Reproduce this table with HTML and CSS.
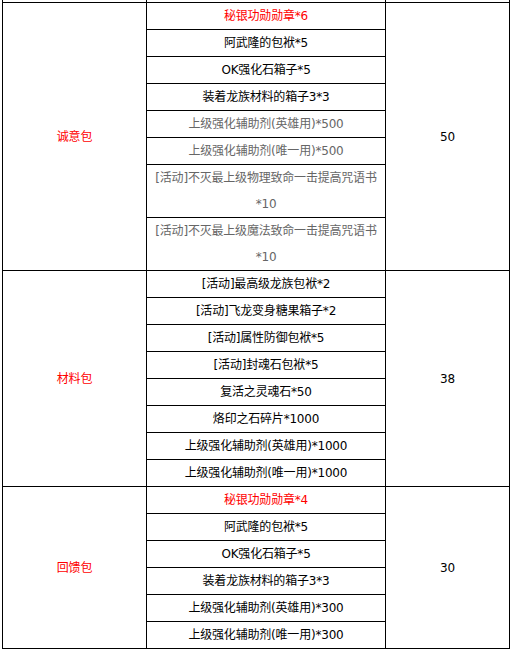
FILE: index.html
```html
<!DOCTYPE html>
<html lang="zh-CN">
<head>
<meta charset="utf-8">
<title>礼包</title>
<link rel="stylesheet" href="styles.css">
</head>
<body>
<table class="packs">
  <colgroup>
    <col class="c-name">
    <col class="c-items">
    <col class="c-price">
  </colgroup>
  <tbody>
    <tr class="stub"><td></td><td></td><td></td></tr>

    <tr>
      <td class="name" rowspan="8">诚意包</td>
      <td class="item red">秘银功勋勋章*6</td>
      <td class="price" rowspan="8">50</td>
    </tr>
    <tr><td class="item">阿武隆的包袱*5</td></tr>
    <tr><td class="item">OK强化石箱子*5</td></tr>
    <tr><td class="item">装着龙族材料的箱子3*3</td></tr>
    <tr><td class="item gray">上级强化辅助剂(英雄用)*500</td></tr>
    <tr><td class="item gray">上级强化辅助剂(唯一用)*500</td></tr>
    <tr><td class="item gray tall">[活动]不灭最上级物理致命一击提高咒语书<br>*10</td></tr>
    <tr><td class="item gray tall">[活动]不灭最上级魔法致命一击提高咒语书<br>*10</td></tr>

    <tr>
      <td class="name" rowspan="8">材料包</td>
      <td class="item">[活动]最高级龙族包袱*2</td>
      <td class="price" rowspan="8">38</td>
    </tr>
    <tr><td class="item">[活动]飞龙变身糖果箱子*2</td></tr>
    <tr><td class="item">[活动]属性防御包袱*5</td></tr>
    <tr><td class="item">[活动]封魂石包袱*5</td></tr>
    <tr><td class="item">复活之灵魂石*50</td></tr>
    <tr><td class="item">烙印之石碎片*1000</td></tr>
    <tr><td class="item">上级强化辅助剂(英雄用)*1000</td></tr>
    <tr><td class="item">上级强化辅助剂(唯一用)*1000</td></tr>

    <tr>
      <td class="name" rowspan="6">回馈包</td>
      <td class="item red">秘银功勋勋章*4</td>
      <td class="price" rowspan="6">30</td>
    </tr>
    <tr><td class="item">阿武隆的包袱*5</td></tr>
    <tr><td class="item">OK强化石箱子*5</td></tr>
    <tr><td class="item">装着龙族材料的箱子3*3</td></tr>
    <tr><td class="item">上级强化辅助剂(英雄用)*300</td></tr>
    <tr><td class="item">上级强化辅助剂(唯一用)*300</td></tr>
  </tbody>
</table>
</body>
</html>
```

FILE: styles.css
```css
html, body {
  margin: 0;
  padding: 0;
  background: #ffffff;
}

body {
  padding-left: 2px;
  font-family: "DejaVu Sans", "Noto Sans CJK SC", sans-serif;
  font-size: 12px;
  color: #000000;
}

.packs {
  border-collapse: collapse;
  table-layout: fixed;
  width: 507px;
}

.c-name { width: 144px; }
.c-items { width: 239px; }
.c-price { width: 124px; }

.packs td {
  border: 1px solid #000000;
  padding: 0 4px;
  text-align: center;
  vertical-align: middle;
  line-height: 26px;
  height: 26px;
  box-sizing: content-box;
  letter-spacing: -0.2px;
}

.packs tr.stub td {
  border-top: none;
  height: 2px;
  line-height: 2px;
  padding: 0;
}

.packs td.tall {
  height: 52px;
}

.name {
  color: #ff0000;
}

.red {
  color: #ff0000;
}

.gray {
  color: #666666;
}
```
